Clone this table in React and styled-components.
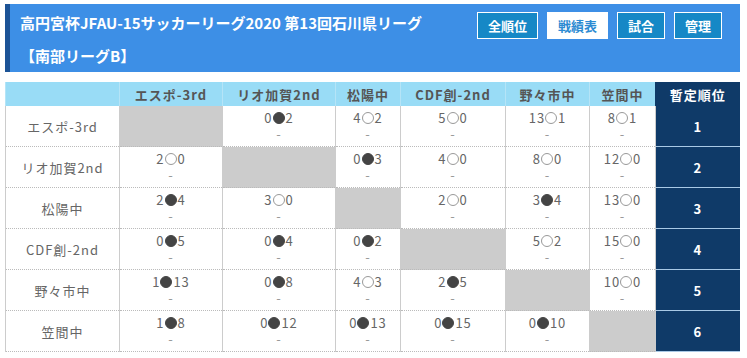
import React from 'react';
import styled, { createGlobalStyle } from 'styled-components';

const GlobalStyle = createGlobalStyle`
  body {
    margin: 0;
    background: #fff;
    font-family: "Noto Sans CJK JP", "Noto Sans", sans-serif;
  }
`;

const Page = styled.div`
  padding: 4px 7px 0 5px;
`;

const TitleBar = styled.div`
  display: flex;
  align-items: flex-start;
  background: #3d8fe6;
  border-left: 5px solid #1c5396;
  height: 68px;
  padding: 0 18px 0 10px;
`;

const Title = styled.h1`
  flex: 1;
  margin: 0;
  padding-top: 2px;
  color: #fff;
  font-size: 15px;
  font-weight: bold;
  line-height: 33px;
`;

const Nav = styled.div`
  display: flex;
  gap: 9px;
  margin-top: 8px;
`;

const NavButton = styled.div`
  height: 25px;
  line-height: 25px;
  padding: 0 10px;
  border: 1px solid #fff;
  font-size: 13px;
  font-weight: bold;
  background: ${p => (p.active ? '#fff' : '#1688c6')};
  color: ${p => (p.active ? '#2c8bd2' : '#fff')};
`;

const Table = styled.table`
  margin-top: 10px;
  width: 734px;
  table-layout: fixed;
  border-collapse: collapse;
  font-size: 13px;
  letter-spacing: 1px;
  color: #666;
`;

const Th = styled.th`
  height: 24px;
  padding: 0;
  background: ${p => (p.rank ? '#0f3a68' : '#99dcf6')};
  color: ${p => (p.rank ? '#fff' : '#555')};
  border-left: 1px solid ${p => (p.rank ? '#0f3a68' : '#b5e4f7')};
  font-weight: bold;
  text-align: center;
`;

const Td = styled.td`
  height: 40px;
  padding: 0;
  text-align: center;
  vertical-align: middle;
  border-left: 1px solid #ccc;
  border-right: 1px solid #ccc;
  border-bottom: 1px dotted #bbb;
  background: ${p => (p.self ? '#cccccc' : '#fff')};
`;

const RankTd = styled.td`
  padding: 0;
  text-align: center;
  background: #0f3a68;
  color: #fff;
  font-weight: bold;
  border-bottom: 1px solid #a9c9e6;
`;

const Score = styled.div`
  display: flex;
  justify-content: center;
  align-items: center;
  line-height: 16px;
`;

const Dash = styled.div`
  line-height: 16px;
  color: #999;
`;

const Mark = styled.span`
  display: inline-block;
  box-sizing: border-box;
  width: 12px;
  height: 12px;
  margin: 0 1px 0 0;
  border-radius: 50%;
  border: 1px solid ${p => (p.win ? '#999' : '#444')};
  background: ${p => (p.win ? '#fff' : '#444')};
`;

const teams = ['エスポ-3rd', 'リオ加賀2nd', '松陽中', 'CDF創-2nd', '野々市中', '笠間中'];
const widths = [114, 103, 113, 65, 105, 84, 66, 84];

const results = [
  [null, [0, 2], [4, 2], [5, 0], [13, 1], [8, 1]],
  [[2, 0], null, [0, 3], [4, 0], [8, 0], [12, 0]],
  [[2, 4], [3, 0], null, [2, 0], [3, 4], [13, 0]],
  [[0, 5], [0, 4], [0, 2], null, [5, 2], [15, 0]],
  [[1, 13], [0, 8], [4, 3], [2, 5], null, [10, 0]],
  [[1, 8], [0, 12], [0, 13], [0, 15], [0, 10], null],
];

const ScoreCell = ({ r }) => {
  if (!r) return <Td self />;
  const win = r[0] > r[1];
  return (
    <Td>
      <Score>
        <span>{r[0]}</span>
        <Mark win={win} />
        <span>{r[1]}</span>
      </Score>
      <Dash>-</Dash>
    </Td>
  );
};

const App = () => (
  <Page>
    <GlobalStyle />
    <TitleBar>
      <Title>
        高円宮杯JFAU-15サッカーリーグ2020 第13回石川県リーグ
        <br />
        【南部リーグB】
      </Title>
      <Nav>
        <NavButton>全順位</NavButton>
        <NavButton active>戦績表</NavButton>
        <NavButton>試合</NavButton>
        <NavButton>管理</NavButton>
      </Nav>
    </TitleBar>
    <Table>
      <colgroup>
        {widths.map((w, i) => (
          <col key={i} style={{ width: w }} />
        ))}
      </colgroup>
      <thead>
        <tr>
          <Th />
          {teams.map(t => (
            <Th key={t}>{t}</Th>
          ))}
          <Th rank>暫定順位</Th>
        </tr>
      </thead>
      <tbody>
        {results.map((row, i) => (
          <tr key={i}>
            <Td>{teams[i]}</Td>
            {row.map((r, j) => (
              <ScoreCell key={j} r={r} />
            ))}
            <RankTd>{i + 1}</RankTd>
          </tr>
        ))}
      </tbody>
    </Table>
  </Page>
);

export default App;
